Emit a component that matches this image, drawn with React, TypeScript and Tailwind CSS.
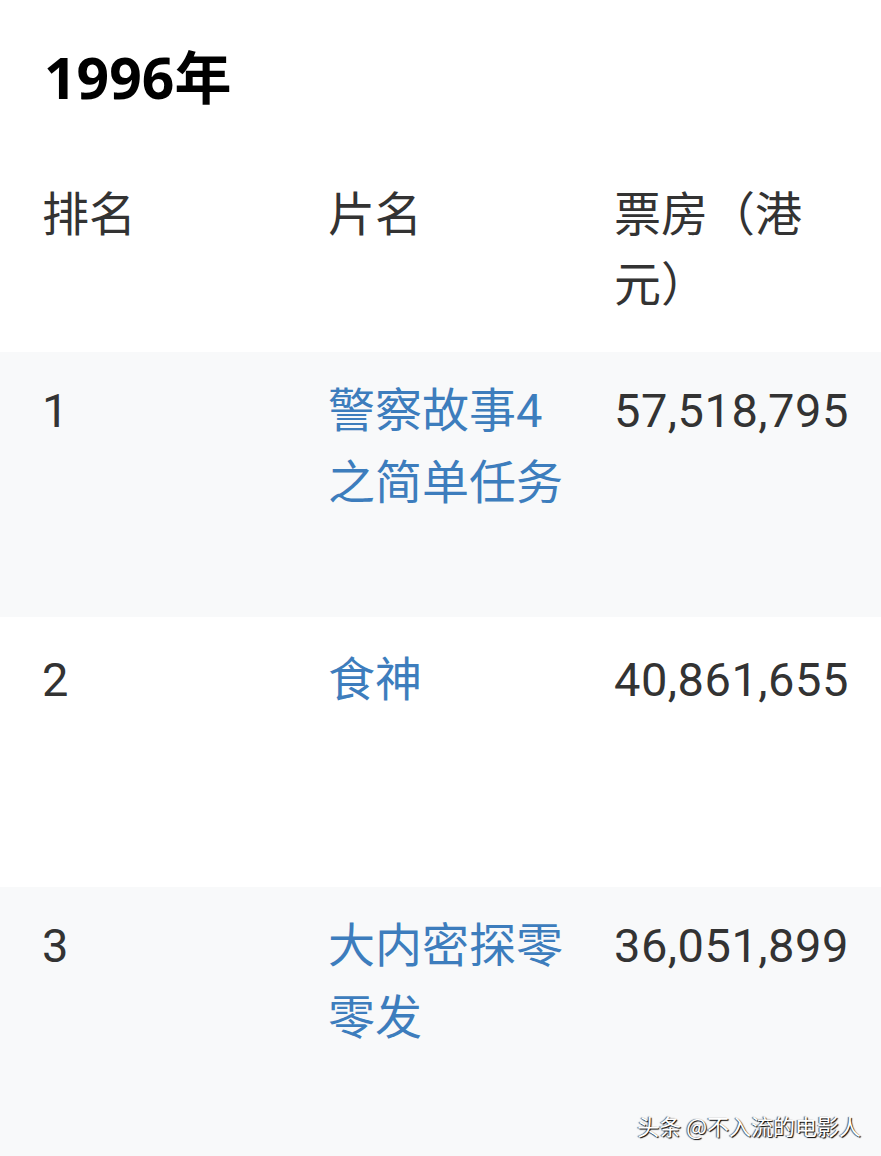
const rows = [
  { rank: "1", title: "警察故事4之简单任务", gross: "57,518,795", bg: "bg-[#f8f9fa]", h: "h-[265px]", pt: "pt-[23px]" },
  { rank: "2", title: "食神", gross: "40,861,655", bg: "bg-white", h: "h-[270px]", pt: "pt-[27px]" },
  { rank: "3", title: "大内密探零零发", gross: "36,051,899", bg: "bg-[#f8f9fa]", h: "h-[269px]", pt: "pt-[23px]" },
];

export default function App() {
  return (
    <div className="relative h-[1156px] w-[881px] overflow-hidden bg-white font-['Roboto','Noto_Sans_CJK_SC',sans-serif] text-[#333333]">
      <div className="h-[150px] pl-[44px] pt-[42px]">
        <h1 className="font-['Noto_Sans','Noto_Sans_CJK_SC',sans-serif] text-[57px] font-bold leading-[70px] text-black">
          1996年
        </h1>
      </div>

      <div className="grid h-[202px] grid-cols-[286px_286px_1fr] pl-[42px] pt-[30px] text-[47px] leading-[70px]">
        <div>排名</div>
        <div>片名</div>
        <div className="w-[215px]">票房（港元）</div>
      </div>

      {rows.map((row) => (
        <div
          key={row.rank}
          className={`grid grid-cols-[286px_286px_1fr] pl-[42px] text-[47px] leading-[72px] ${row.bg} ${row.h} ${row.pt}`}
        >
          <div>{row.rank}</div>
          <div className="w-[245px] text-[#3d7dbd]">{row.title}</div>
          <div className="whitespace-nowrap tracking-[0.5px]">{row.gross}</div>
        </div>
      ))}

      <div className="absolute bottom-[14px] right-[20px] font-['Noto_Sans_CJK_SC',sans-serif] text-[22px] text-white [text-shadow:1px_1px_1px_#000,-1px_0_1px_#555]">
        头条 @不入流的电影人
      </div>
    </div>
  );
}
